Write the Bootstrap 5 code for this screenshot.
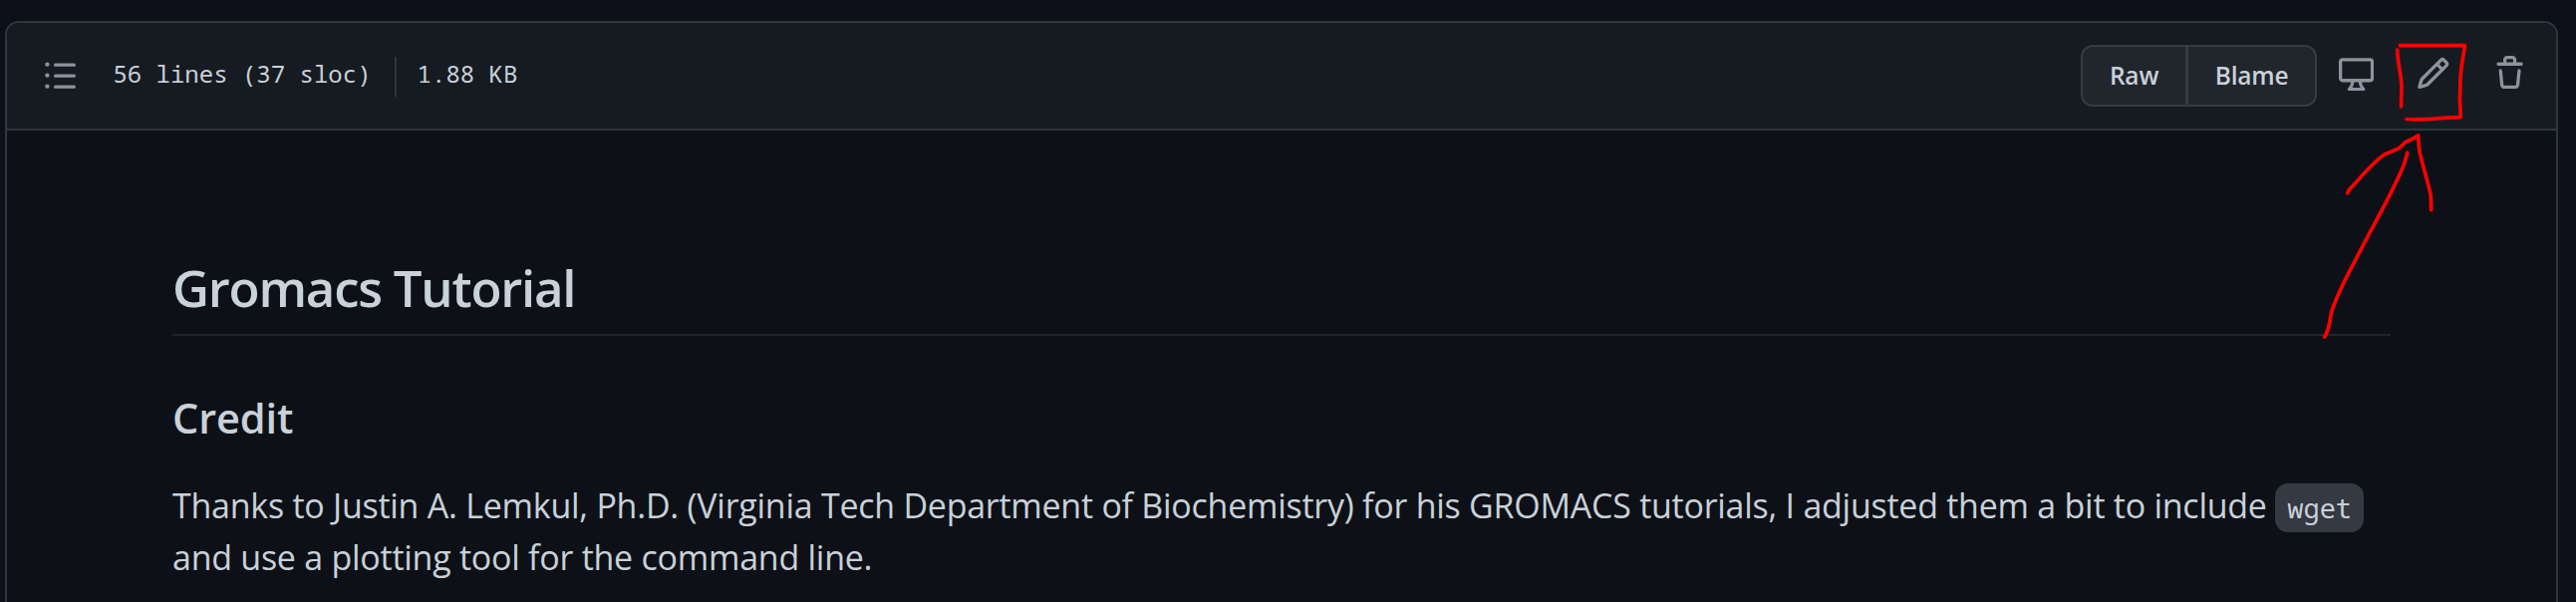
<!DOCTYPE html>
<html lang="en">
<head>
<meta charset="utf-8">
<title>Gromacs Tutorial</title>
<link href="https://cdn.jsdelivr.net/npm/bootstrap@5.3.0/dist/css/bootstrap.min.css" rel="stylesheet">
<script src="https://cdn.jsdelivr.net/npm/bootstrap@5.3.0/dist/js/bootstrap.bundle.min.js"></script>
<style>
body{background:#0d1018;color:#c9d1d9;font-family:"Open Sans","Noto Sans",sans-serif;height:604px;overflow:hidden;padding:21px 18px 0 5px}
.file-box{height:583px;background:#0d1117;border:2px solid #30363d;border-bottom:0;border-radius:14px 14px 0 0;color:#c9d1d9}
.file-head{height:108px;background:#161b22;border-bottom:2px solid #30363d;border-radius:12px 12px 0 0;padding:0 28.8px 0 35.8px}
.mono{font-family:"Noto Sans Mono","DejaVu Sans Mono",monospace}
.info{font-size:24px;line-height:30px;white-space:pre;margin-left:35.4px}
.info span{padding-bottom:5px}
.info .sep{width:2px;height:40px;padding:0;background:#30363d;margin:2px 20.5px 0 23.5px}
.oct{width:35.2px;height:35.2px;fill:#8b949e;display:block;flex:none}
.btn-file{--bs-btn-color:#c9d1d9;--bs-btn-bg:#21262d;--bs-btn-border-color:#363b42;--bs-btn-hover-color:#c9d1d9;--bs-btn-hover-bg:#30363d;--bs-btn-hover-border-color:#8b949e;--bs-btn-border-radius:12px;--bs-btn-border-width:2px;--bs-btn-font-size:24.5px;--bs-btn-font-weight:600;height:62px;padding:0;letter-spacing:-.2px;line-height:58px}
.btn-group>.btn-file:not(:first-child){margin-left:-2px}
.btn-raw{width:107px}
.btn-blame{width:131px}
.tools{gap:41.8px;margin:0 0 5px 22px}
.prose{padding:125px 166px 0 166px}
.prose h1{font-size:51px;font-weight:600;line-height:64px;letter-spacing:-1.25px;padding-bottom:15px;border-bottom:2px solid #21262d;margin:0 0 55px}
.prose h2{font-size:41.5px;font-weight:600;line-height:54px;letter-spacing:-.1px;margin:0 0 35px}
.prose p{font-size:34px;line-height:52px;letter-spacing:-.26px;margin:0}
.prose code{font-size:27px;line-height:36px;letter-spacing:0;color:#c9d1d9;background:#353941;border-radius:13px;padding:6px 12px}
.pen{position:absolute;left:0;top:0;pointer-events:none;fill:none;stroke:#f00;stroke-width:3.7;stroke-linecap:round;stroke-linejoin:round}
</style>
</head>
<body>
<main class="file-box">
  <header class="file-head d-flex align-items-center justify-content-between">
    <div class="d-flex align-items-center">
      <svg class="oct" viewBox="0 0 16 16"><path d="M2 4a1 1 0 100-2 1 1 0 000 2zm3.75-1.5a.75.75 0 000 1.5h8.5a.75.75 0 000-1.5zm0 5a.75.75 0 000 1.5h8.5a.75.75 0 000-1.5zm0 5a.75.75 0 000 1.5h8.5a.75.75 0 000-1.5zM3 8a1 1 0 11-2 0 1 1 0 012 0zm-1 6a1 1 0 100-2 1 1 0 000 2z"/></svg>
      <div class="mono info d-flex align-items-center"><span>56 lines (37 sloc)</span><span class="sep"></span><span>1.88 KB</span></div>
    </div>
    <div class="d-flex align-items-center">
      <div class="btn-group">
        <button type="button" class="btn btn-file btn-raw">Raw</button>
        <button type="button" class="btn btn-file btn-blame">Blame</button>
      </div>
      <div class="tools d-flex">
        <svg class="oct" viewBox="0 0 16 16"><path fill-rule="evenodd" d="M1.75 2.5h12.5a.25.25 0 01.25.25v7.5a.25.25 0 01-.25.25H1.75a.25.25 0 01-.25-.25v-7.5a.25.25 0 01.25-.25zM14.25 1H1.75A1.75 1.75 0 000 2.75v7.5C0 11.216.784 12 1.75 12h3.727c-.1 1.041-.52 1.872-1.292 2.757A.75.75 0 004.75 16h6.5a.75.75 0 00.565-1.243c-.772-.885-1.193-1.716-1.292-2.757h3.727A1.75 1.75 0 0016 10.25v-7.5A1.75 1.75 0 0014.25 1zM9.018 12H6.982a5.72 5.72 0 01-.765 2.5h3.566a5.72 5.72 0 01-.765-2.5z"/></svg>
        <svg class="oct" viewBox="0 0 16 16"><path fill-rule="evenodd" d="M11.013 1.427a1.75 1.75 0 012.474 0l1.086 1.086a1.75 1.75 0 010 2.474l-8.61 8.61c-.21.21-.47.364-.756.445l-3.251.93a.75.75 0 01-.927-.928l.929-3.25a1.75 1.75 0 01.445-.758l8.61-8.61zm1.414 1.06a.25.25 0 00-.354 0L10.811 3.75l1.439 1.44 1.263-1.263a.25.25 0 000-.354l-1.086-1.086zM11.189 6.25L9.75 4.81l-6.286 6.287a.25.25 0 00-.064.108l-.558 1.953 1.953-.558a.249.249 0 00.108-.064l6.286-6.286z"/></svg>
        <svg class="oct" viewBox="0 0 16 16"><path fill-rule="evenodd" d="M6.5 1.75a.25.25 0 01.25-.25h2.5a.25.25 0 01.25.25V3h-3V1.75zm4.5 0V3h2.25a.75.75 0 010 1.5H2.75a.75.75 0 010-1.5H5V1.75C5 .784 5.784 0 6.75 0h2.5C10.216 0 11 .784 11 1.75zM4.496 6.675a.75.75 0 10-1.492.15l.66 6.6A1.75 1.75 0 005.405 15h5.19c.9 0 1.652-.681 1.741-1.576l.66-6.6a.75.75 0 00-1.492-.149l-.66 6.6a.25.25 0 01-.249.225h-5.19a.25.25 0 01-.249-.225l-.66-6.6z"/></svg>
      </div>
    </div>
  </header>
  <article class="prose">
    <h1>Gromacs Tutorial</h1>
    <h2>Credit</h2>
    <p>Thanks to Justin A. Lemkul, Ph.D. (Virginia Tech Department of Biochemistry) for his GROMACS tutorials, I adjusted them a bit to include <code class="mono">wget</code> and use a plotting tool for the command line.</p>
  </article>
</main>
<!-- hand-drawn frame and arrow over the edit button -->
<svg class="pen" width="2585" height="604" viewBox="0 0 2585 604">
  <path d="M2405.7 50C2406 66 2410 74 2410 88L2409.5 107"/>
  <path d="M2408.5 45.7H2473.5C2472 57 2469 68 2469 82C2468 96 2468.5 108 2469.3 117.7C2448 118 2432 121 2415 119.5"/>
  <path d="M2415.7 153.3C2414 160 2413 164 2411.7 166.7C2407 178 2402 188 2396.7 198.3C2385 221 2373 242 2363.3 261.7C2356 275 2346 295 2339.7 312.3C2338 320 2338 330 2332.7 338"/>
  <path d="M2355.7 193.7L2357 190.7C2369 178 2380 164 2392.7 155C2398 152.500 2404 151 2408.3 148L2413.7 142.700L2421.700 139L2426.700 135.700C2427 142 2427 147 2428.300 153.300C2432 169 2436 181 2439.300 196L2439.700 210.700"/>
</svg>
</body>
</html>
